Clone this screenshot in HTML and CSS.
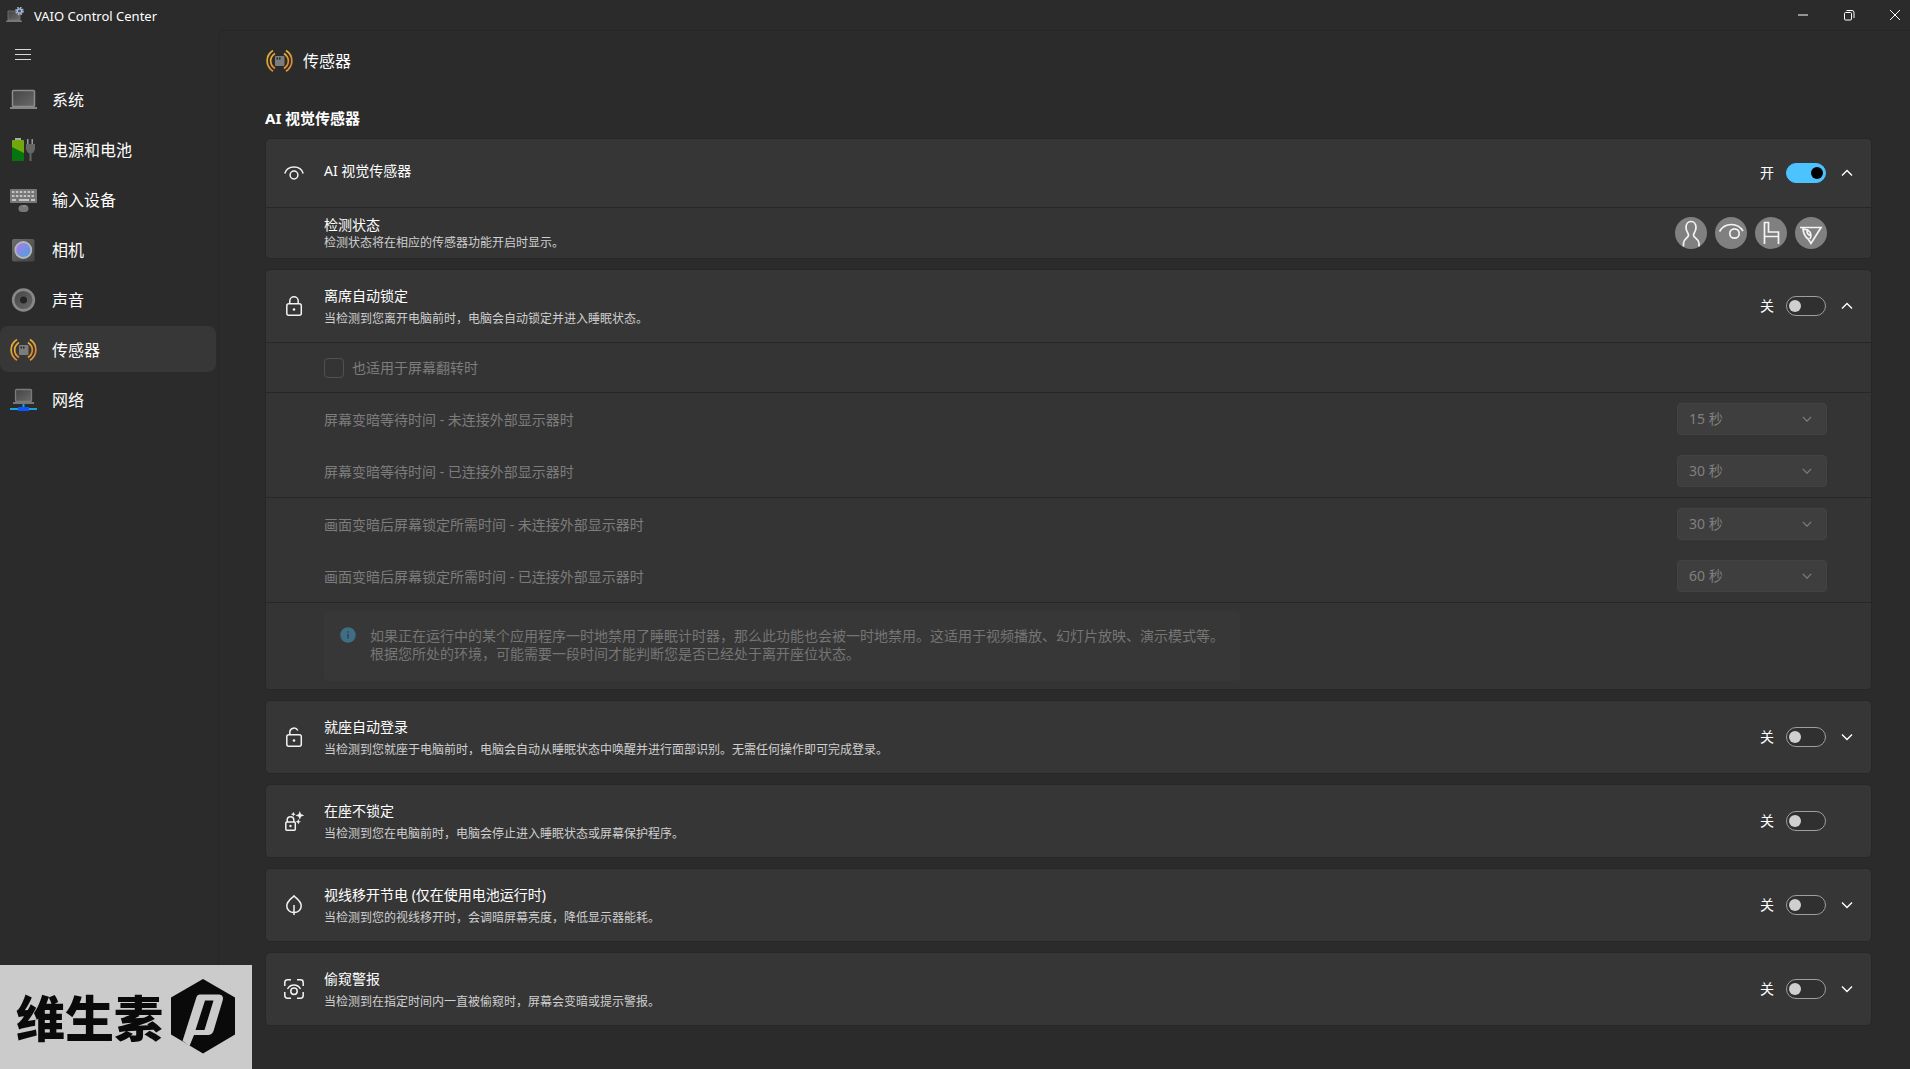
FILE: index.html
```html
<!DOCTYPE html>
<html lang="zh-CN">
<head>
<meta charset="utf-8">
<title>VAIO Control Center</title>
<link rel="stylesheet" href="styles.css">
</head>
<body>
<svg class="defs" aria-hidden="true">
  <defs>
    <linearGradient id="steel" x1="0" y1="0" x2="1" y2="1"><stop offset="0" stop-color="#6c6c6c"/><stop offset="1" stop-color="#444"/></linearGradient>
    <linearGradient id="screen" x1="0" y1="0" x2="1" y2="1"><stop offset="0" stop-color="#444"/><stop offset="1" stop-color="#6a6a6a"/></linearGradient>
    <linearGradient id="lens" x1="0" y1="0" x2="1" y2="1"><stop offset="0" stop-color="#b678e8"/><stop offset="1" stop-color="#3fa4e0"/></linearGradient>
    <linearGradient id="amber" x1="0" y1="0" x2="1" y2="1"><stop offset="0" stop-color="#e3b93a"/><stop offset="1" stop-color="#e0812a"/></linearGradient>
    <symbol id="sensor" viewBox="0 0 27 24">
      <g fill="none" stroke="url(#amber)" stroke-width="1.7"><path d="M7 1.500C-.8 6.500-.8 17 7 22.300"/><path d="M9 4.500C3.200 8.500 3.200 15.500 9 19.500"/><path d="M20 1.500C27.800 6.500 27.800 17 20 22.300"/><path d="M18 4.500C23.800 8.500 23.800 15.500 18 19.500"/></g>
      <rect x="9" y="7" width="9.500" height="10" rx="1" fill="#7c7c7c"/><path d="M10.500 8.500h1.500v2h-1.500zM13 8.500h1.500v2H13z" fill="#222"/>
    </symbol>
    <symbol id="up" viewBox="0 0 12 12"><path d="M1 8.500l5-5 5 5" fill="none" stroke="currentColor" stroke-width="1.400"/></symbol>
    <symbol id="down" viewBox="0 0 12 12"><path d="M1 3.500l5 5 5-5" fill="none" stroke="currentColor" stroke-width="1.400"/></symbol>
  </defs>
</svg>

<header class="titlebar">
  <svg class="app-icon" viewBox="0 0 18 16"><path d="M2 4h12v9H2z" fill="url(#screen)" stroke="#777" stroke-width=".8"/><path d="M0 14l2-1h12l2 1v1H0z" fill="#777"/><circle cx="13.500" cy="4" r="3.400" fill="none" stroke="#aab2bd" stroke-width="1.800" stroke-dasharray="1.600 1.070"/><circle cx="13.500" cy="4" r="2.200" fill="#2458a8" stroke="#b9c0ca" stroke-width="1.200"/></svg>
  <span class="app-name">VAIO Control Center</span>
  <div class="window-buttons">
    <button aria-label="最小化"><svg viewBox="0 0 12 12"><path d="M1 6h10"/></svg></button>
    <button aria-label="还原"><svg viewBox="0 0 12 12"><rect x="1.500" y="3.500" width="7" height="7.500" rx="1"/><path d="M3.500 1.500H9q2 0 2 2v5.500"/></svg></button>
    <button aria-label="关闭"><svg viewBox="0 0 12 12"><path d="M1 1l10 10M11 1L1 11"/></svg></button>
  </div>
</header>

<div class="shell">
  <nav class="sidebar">
    <button class="menu-button" aria-label="菜单"><svg viewBox="0 0 16 12"><path d="M0 1.500h16M0 6.500h16M0 11.500h16"/></svg></button>
    <a class="nav-item" href="#system"><svg viewBox="0 0 27 24"><rect x="2.500" y="2.500" width="22" height="16" rx="1" fill="url(#screen)" stroke="#8d8d8d" stroke-width="1.500"/><path d="M0 19h27v2H0z" fill="#858585"/></svg>系统</a>
    <a class="nav-item" href="#power"><svg viewBox="0 0 27 24"><path d="M5 0h6v3H5z" fill="#aaa"/><rect x="2" y="2" width="12" height="21" rx="1" fill="#07750d"/><path d="M2 3q0-1 1-1h10q1 0 1 1v12L2 9z" fill="#72a80e"/><path d="M17 1h1.500v5H17zM21.500 1H23v5h-1.500z" fill="#999"/><path d="M16 6h9v5q-1 4-3.500 4.500V23h-2v-7.500Q17 15 16 11z" fill="#666"/></svg>电源和电池</a>
    <a class="nav-item" href="#input"><svg viewBox="0 0 27 24"><rect y="1" width="27" height="14" rx="1" fill="#777"/><path d="M2 4h23M2 8h23" stroke="#c4c4c4" stroke-width="2.200" stroke-dasharray="2.400 1.500"/><path d="M2 12h4M9 12h10M21 12h4" stroke="#c4c4c4" stroke-width="2"/><rect x="8.500" y="17" width="10" height="7" rx="3.500" fill="#777"/><path d="M13 18h3" stroke="#999"/></svg>输入设备</a>
    <a class="nav-item" href="#camera"><svg viewBox="0 0 27 24"><rect x="2" y="1" width="22.500" height="22.500" rx="2" fill="url(#steel)"/><circle cx="13.300" cy="12" r="8" fill="url(#lens)" stroke="#b6b6b6" stroke-width="1.800"/></svg>相机</a>
    <a class="nav-item" href="#sound"><svg viewBox="1 0 25 26"><circle cx="13.500" cy="13" r="11.200" fill="url(#screen)" stroke="#888" stroke-width="2.800"/><circle cx="13.500" cy="13" r="3.800" fill="#242424"/></svg>声音</a>
    <a class="nav-item active" href="#sensor-page" aria-current="page"><svg><use href="#sensor"/></svg>传感器</a>
    <a class="nav-item" href="#network"><svg viewBox="0 0 27 24"><rect x="5.500" y="1.500" width="16" height="12" rx="1" fill="url(#screen)" stroke="#7a7a7a" stroke-width="1.300"/><path d="M3 14h21v2H3z" fill="#777"/><path d="M13.500 16v5M0 21h27" stroke="#1aa3d4" stroke-width="2"/><path d="M8 19h11v4H8z" fill="#0a56ff"/></svg>网络</a>
  </nav>

  <main class="content" id="sensor-page">
    <h1 class="page-title"><svg><use href="#sensor"/></svg>传感器</h1>
    <h2 class="section-title">AI 视觉传感器</h2>

    <div class="cards">
      <section class="card">
        <div class="card-head first">
          <svg class="card-icon" viewBox="0 0 20 20"><path d="M.8 10.500C2 6.500 5.500 4 10 4s8 2.500 9.200 6.500"/><circle cx="10" cy="12" r="3.900"/></svg>
          <div class="card-text"><h3>AI 视觉传感器</h3></div>
          <label class="switch">开<input type="checkbox" role="switch" checked></label>
          <button class="expander" aria-label="收起"><svg><use href="#up"/></svg></button>
        </div>
        <div class="row status-row">
          <div class="card-text tight"><h3>检测状态</h3><p>检测状态将在相应的传感器功能开启时显示。</p></div>
          <div class="badges">
            <svg viewBox="0 0 32 32"><circle class="disc" cx="16" cy="16" r="16"/><path d="M8.500 29.500V26c0-4 5-5 5-8 0-2-2.500-3.500-2.500-7.500 0-3.500 2-6 5-6s5 2.500 5 6c0 4-2.500 5.500-2.500 7.500 0 3 5.500 4 5.500 8v3.500"/></svg>
            <svg viewBox="0 0 32 32"><circle class="disc" cx="16" cy="16" r="16"/><path d="M4.500 14.500C7 10 11 7.500 16.500 7.500c5 0 9 2.500 11.500 6.500"/><circle cx="19.500" cy="16.500" r="4.700"/></svg>
            <svg viewBox="0 0 32 32"><circle class="disc" cx="16" cy="16" r="16"/><path d="M9.500 27V5.500h4V15h10v12M9.500 19.500h14"/></svg>
            <svg viewBox="0 0 32 32"><circle class="disc" cx="16" cy="16" r="16"/><path d="M5 10.500h21L16 26.500l-3.500-5.500M8 10.500c0 4.500 1 8 4.500 11M9 12.500c5-.5 8.500 4 6 9.500M12.500 12.500c-1 3 0 5.500 3 6"/></svg>
          </div>
        </div>
      </section>

      <section class="card">
        <div class="card-head">
          <svg class="card-icon" viewBox="0 0 20 20"><rect x="2.800" y="7.700" width="14.500" height="11.500" rx="2"/><path d="M5.800 7.500V5a4.200 4.200 0 018.400 0v2.500"/><circle class="dot" cx="10" cy="13.500" r="1.300"/></svg>
          <div class="card-text"><h3>离席自动锁定</h3><p>当检测到您离开电脑前时，电脑会自动锁定并进入睡眠状态。</p></div>
          <label class="switch">关<input type="checkbox" role="switch"></label>
          <button class="expander" aria-label="收起"><svg><use href="#up"/></svg></button>
        </div>
        <div class="row check-row"><label class="check"><input type="checkbox" disabled>也适用于屏幕翻转时</label></div>
        <div class="row options">
          <div class="option"><label for="dim1">屏幕变暗等待时间 - 未连接外部显示器时</label><div class="select"><select id="dim1" disabled><option>15 秒</option></select><svg><use href="#down"/></svg></div></div>
          <div class="option"><label for="dim2">屏幕变暗等待时间 - 已连接外部显示器时</label><div class="select"><select id="dim2" disabled><option>30 秒</option></select><svg><use href="#down"/></svg></div></div>
        </div>
        <div class="row options">
          <div class="option"><label for="lock1">画面变暗后屏幕锁定所需时间 - 未连接外部显示器时</label><div class="select"><select id="lock1" disabled><option>30 秒</option></select><svg><use href="#down"/></svg></div></div>
          <div class="option"><label for="lock2">画面变暗后屏幕锁定所需时间 - 已连接外部显示器时</label><div class="select"><select id="lock2" disabled><option>60 秒</option></select><svg><use href="#down"/></svg></div></div>
        </div>
        <div class="row info-row">
          <div class="info">
            <svg viewBox="0 0 16 16"><circle cx="8" cy="8" r="7.800" fill="#3f6d84"/><path d="M8 7v4.500M8 4.300v1.400" stroke="#2b3c45" stroke-width="1.300"/></svg>
            <p>如果正在运行中的某个应用程序一时地禁用了睡眠计时器，那么此功能也会被一时地禁用。这适用于视频播放、幻灯片放映、演示模式等。<br>根据您所处的环境，可能需要一段时间才能判断您是否已经处于离开座位状态。</p>
          </div>
        </div>
      </section>

      <section class="card">
        <div class="card-head">
          <svg class="card-icon" viewBox="0 0 20 20"><rect x="2.800" y="7.700" width="14.500" height="11.500" rx="2"/><path d="M5.800 7.500V5a4.200 4.200 0 018-1.500"/><circle class="dot" cx="10" cy="13.500" r="1.300"/></svg>
          <div class="card-text"><h3>就座自动登录</h3><p>当检测到您就座于电脑前时，电脑会自动从睡眠状态中唤醒并进行面部识别。无需任何操作即可完成登录。</p></div>
          <label class="switch">关<input type="checkbox" role="switch"></label>
          <button class="expander" aria-label="展开"><svg><use href="#down"/></svg></button>
        </div>
      </section>

      <section class="card">
        <div class="card-head">
          <svg class="card-icon" viewBox="0 0 20 20"><rect x="1.800" y="11" width="9.500" height="8.200" rx="1"/><path d="M3.200 11V9a3.300 3.300 0 016.600 0v2"/><circle class="dot" cx="6.500" cy="15" r="1.200"/><path d="M15.800 2.200l.6 1.600 1.600.6-1.600.6-.6 1.600-.6-1.600-1.600-.6 1.600-.6z"/><path class="dot" d="M9.300.8l.7 1.700 1.700.7-1.700.7-.7 1.700-.7-1.700-1.700-.7 1.700-.7zM14.300 8l.8 1.900 1.900.8-1.900.8-.8 1.900-.8-1.900-1.900-.8 1.900-.8z"/></svg>
          <div class="card-text"><h3>在座不锁定</h3><p>当检测到您在电脑前时，电脑会停止进入睡眠状态或屏幕保护程序。</p></div>
          <label class="switch solo">关<input type="checkbox" role="switch"></label>
        </div>
      </section>

      <section class="card">
        <div class="card-head">
          <svg class="card-icon" viewBox="0 0 20 20"><path d="M10 .8c1.500 2.200 7.200 4.700 7.200 10.200 0 4-3.200 6.500-7.200 6.500S2.800 15 2.800 11C2.800 5.500 8.500 3 10 .8zM10 10v10"/></svg>
          <div class="card-text"><h3>视线移开节电 (仅在使用电池运行时)</h3><p>当检测到您的视线移开时，会调暗屏幕亮度，降低显示器能耗。</p></div>
          <label class="switch">关<input type="checkbox" role="switch"></label>
          <button class="expander" aria-label="展开"><svg><use href="#down"/></svg></button>
        </div>
      </section>

      <section class="card">
        <div class="card-head">
          <svg class="card-icon" viewBox="0 0 20 20"><path d="M.8 7V3.500q0-2.700 2.700-2.700H7M13 .8h3.500q2.700 0 2.700 2.700V7M19.200 13v3.500q0 2.700-2.700 2.700H13M7 19.200H3.500q-2.700 0-2.700-2.700V13"/><path d="M3.500 10C5 7.300 7.200 6 10 6s5 1.300 6.500 4"/><circle cx="10" cy="12.300" r="3.200"/></svg>
          <div class="card-text"><h3>偷窥警报</h3><p>当检测到在指定时间内一直被偷窥时，屏幕会变暗或提示警报。</p></div>
          <label class="switch">关<input type="checkbox" role="switch"></label>
          <button class="expander" aria-label="展开"><svg><use href="#down"/></svg></button>
        </div>
      </section>
    </div>
  </main>
</div>

<div class="brand">
  <span>维生素</span>
  <svg viewBox="0 0 64 75"><path d="M32 0l32 18.500v37L32 74.500 0 55.500v-37z" fill="#0a0a0a"/><path fill-rule="evenodd" d="M28.500 15.500H48q5 .5 3.800 5.500L42.500 52q-1.500 4-5.500 4H23l-4.500 11-7-5L25.500 18q.8-2.500 3-2.500zM34 21.500h8.500l-9 29.500h-9z" fill="#cbcbcb"/></svg>
</div>
</body>
</html>
```
FILE: styles.css
```css
* {
  box-sizing: border-box;
}

body {
  margin: 0;
  min-height: 100vh;
  display: flex;
  flex-direction: column;
  background: #2b2b2b;
  color: #fff;
  font: 14px/20px "Noto Sans", "Noto Sans CJK SC", sans-serif;
}

h1, h2, h3, p {
  margin: 0;
  font-weight: 400;
}

button {
  padding: 0;
  border: 0;
  background: none;
  color: inherit;
  display: grid;
  place-items: center;
}

.defs {
  position: absolute;
  width: 0;
  height: 0;
}

/* Title bar */
.titlebar {
  display: flex;
  align-items: center;
  height: 30px;
  padding-left: 6px;
}

.app-icon {
  width: 18px;
  height: 16px;
}

.app-name {
  margin-left: 10px;
  padding-top: 2px;
  font-size: 13px;
}

.window-buttons {
  display: flex;
  gap: 16px;
  margin-left: auto;
}

.window-buttons button {
  width: 30px;
  height: 30px;
}

.window-buttons svg {
  width: 12px;
  height: 12px;
  fill: none;
  stroke: #fff;
}

/* Sidebar */
.shell {
  display: flex;
  flex: 1;
}

.sidebar {
  flex: none;
  width: 218px;
  display: flex;
  flex-direction: column;
  gap: 4px;
}

.menu-button {
  width: 46px;
  height: 42px;
  padding-top: 6px;
}

.menu-button svg {
  width: 16px;
  height: 12px;
  stroke: #d8d8d8;
}

.nav-item {
  display: flex;
  align-items: center;
  gap: 15px;
  height: 46px;
  margin-right: 2px;
  padding: 2px 0 0 10px;
  border-radius: 8px;
  color: #fff;
  font-size: 16px;
  text-decoration: none;
}

.nav-item svg,
.page-title svg {
  width: 27px;
  height: 24px;
}

.nav-item.active {
  background: #373737;
}

/* Content */
.content {
  flex: 1;
  min-width: 0;
  padding: 16px 38px 44px 46px;
  border-top: 1px solid #272727;
  border-left: 1px solid #272727;
  border-top-left-radius: 8px;
}

.page-title {
  display: flex;
  align-items: center;
  gap: 10px;
  height: 28px;
  padding-left: 1px;
  font-size: 16px;
}

.section-title {
  margin: 33px 0 10px;
  font-size: 15px;
  font-weight: 700;
}

.cards {
  display: flex;
  flex-direction: column;
  gap: 10px;
}

.card {
  border: 1px solid #272727;
  border-radius: 5px;
  background: #363636;
}

.card-head {
  display: flex;
  align-items: center;
  min-height: 72px;
  padding: 0 13px 0 18px;
}

.card-head.first {
  min-height: 68px;
}

.card-icon {
  width: 20px;
  height: 20px;
  margin-right: 20px;
  fill: none;
  stroke: #f2f2f2;
  stroke-width: 1.5;
}

.card-icon .dot {
  fill: #f2f2f2;
  stroke: none;
}

.card-text {
  flex: 1;
  display: flex;
  flex-direction: column;
  gap: 4px;
  padding-top: 2px;
}

.first .card-text {
  padding: 0 0 4px;
}

.card-text h3 {
  font-size: 14px;
}

.card-text p {
  color: #cfcfcf;
  font-size: 12px;
  line-height: 18px;
}

.card-text.tight {
  gap: 0;
}

.tight h3 {
  line-height: 18px;
}

/* Toggle switch */
.switch {
  display: flex;
  align-items: center;
  gap: 12px;
}

.switch.solo {
  margin-right: 32px;
}

.switch input {
  appearance: none;
  display: flex;
  align-items: center;
  width: 40px;
  height: 20px;
  margin: 0;
  padding-left: 2px;
  border: 1px solid #9e9e9e;
  border-radius: 10px;
  background: #303030;
}

.switch input::before {
  content: "";
  width: 12px;
  height: 12px;
  border-radius: 50%;
  background: #cfcfcf;
}

.switch input:checked {
  justify-content: flex-end;
  padding-right: 2px;
  border-color: #4cc2ff;
  background: #4cc2ff;
}

.switch input:checked::before {
  background: #000;
}

.expander {
  width: 22px;
  height: 22px;
  margin-left: 10px;
}

.expander svg {
  width: 12px;
  height: 12px;
}

/* Expanded rows */
.row {
  padding: 0 44px 0 58px;
  border-top: 1px solid #272727;
  background: #343434;
}

.row:last-child {
  border-radius: 0 0 4px 4px;
}

.status-row {
  display: flex;
  align-items: center;
  min-height: 51px;
}

.badges {
  display: flex;
  gap: 8px;
}

.badges svg {
  width: 32px;
  height: 32px;
  fill: none;
  stroke: #f4f4f4;
  stroke-width: 1.7;
}

.badges .disc {
  fill: #808080;
  stroke: none;
}

.check-row {
  display: flex;
  align-items: center;
  min-height: 50px;
}

.check {
  display: flex;
  align-items: center;
  gap: 8px;
  color: #7c7c7c;
}

.check input {
  appearance: none;
  width: 20px;
  height: 20px;
  margin: 0;
  border: 1px solid #505050;
  border-radius: 4px;
}

.options {
  display: flex;
  flex-direction: column;
  gap: 20px;
  padding-top: 10px;
  padding-bottom: 10px;
}

.option {
  display: flex;
  align-items: center;
  justify-content: space-between;
  color: #7c7c7c;
}

.option label {
  padding-top: 2px;
}

.select {
  position: relative;
  width: 150px;
}

.select select {
  appearance: none;
  display: block;
  width: 100%;
  height: 32px;
  padding: 0 11px;
  border: 1px solid #434343;
  border-radius: 4px;
  background: #3e3e3e;
  color: #808080;
  font: inherit;
  opacity: 1;
}

.select svg {
  position: absolute;
  top: 11px;
  right: 15px;
  width: 10px;
  height: 10px;
  color: #808080;
  pointer-events: none;
}

.info-row {
  padding-top: 8px;
  padding-bottom: 8px;
}

.info {
  display: flex;
  align-items: flex-start;
  gap: 14px;
  width: fit-content;
  min-height: 70px;
  padding: 16px 16px 18px;
  border-radius: 4px;
  background: #373737;
  color: #757575;
}

.info svg {
  flex: none;
  width: 16px;
  height: 16px;
}

.info p {
  line-height: 18px;
}

/* Brand plate over the lower left corner */
.brand {
  position: fixed;
  left: 0;
  bottom: 0;
  display: flex;
  align-items: center;
  gap: 8px;
  width: 252px;
  height: 104px;
  padding: 0 0 2px 16px;
  background: #cbcbcb;
  color: #0a0a0a;
  font: 900 49px/72px "Noto Sans CJK SC", sans-serif;
}

.brand svg {
  width: 64px;
  height: 75px;
}
```
